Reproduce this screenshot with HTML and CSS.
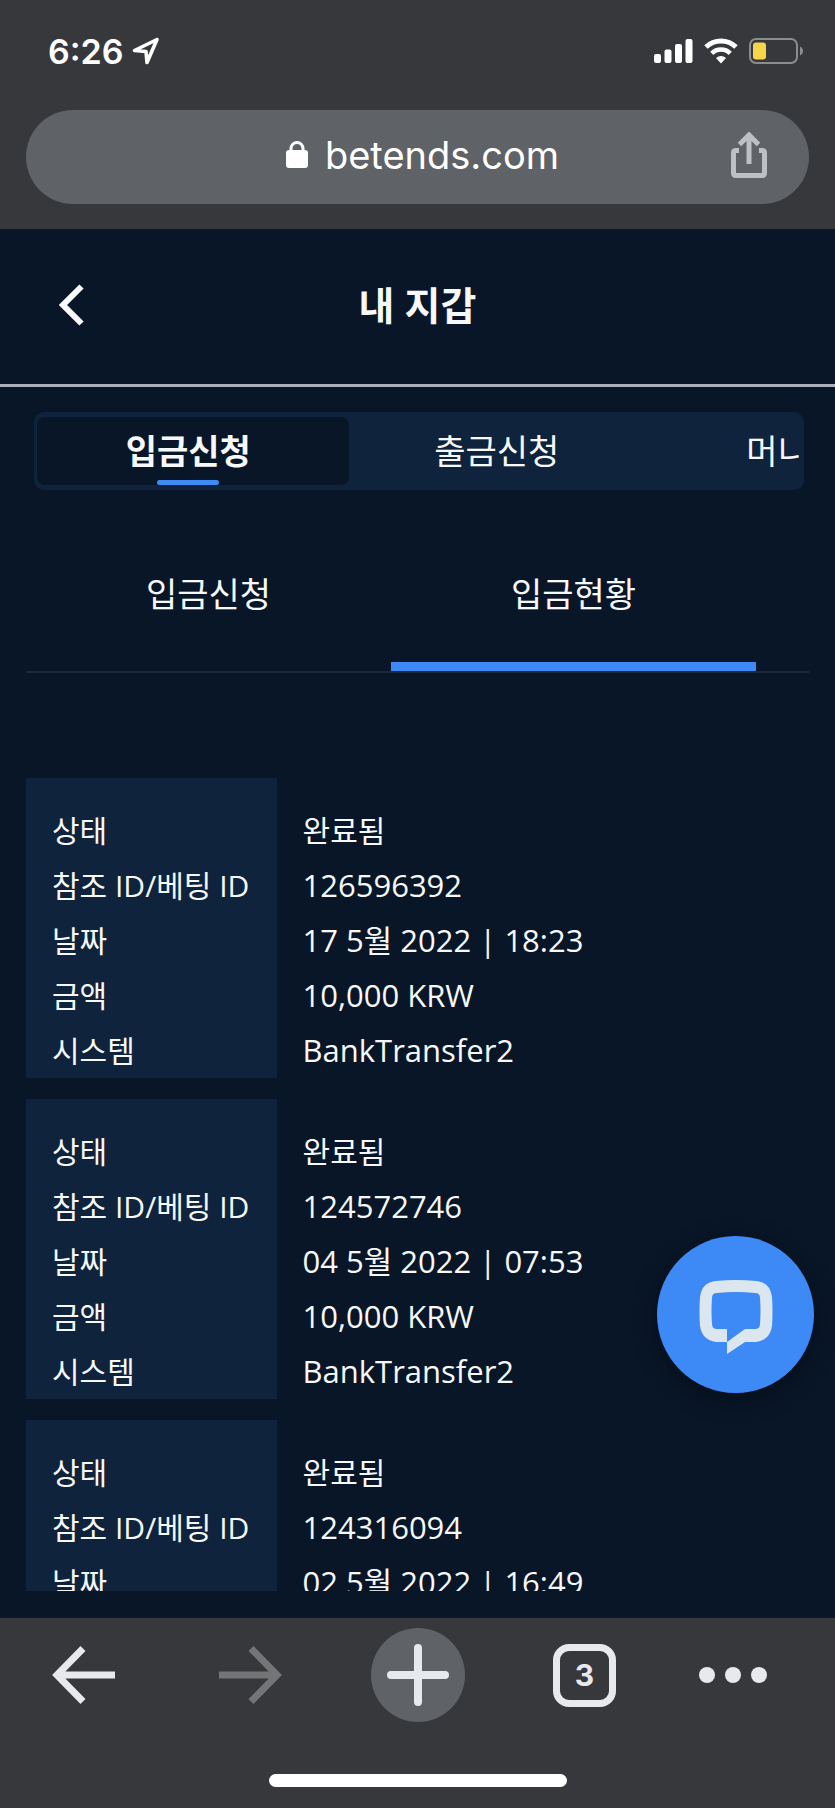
FILE: index.html
```html
<!DOCTYPE html>
<html lang="ko">
<head>
    <meta charset="UTF-8">
    <meta name="viewport" content="width=device-width, initial-scale=1.0">
    <title>내 지갑</title>
    <link rel="stylesheet" href="styles.css">
</head>
<body>

<!-- Browser top -->
<div class="browser-top">
    <div class="status-bar">
        <div class="status-left">
            <span class="time">6:26</span>
            <svg width="28" height="28" viewBox="0 0 28 28" aria-hidden="true">
                <path d="M25 2.500L2.500 13.500L14 14.500L15 25.500Z" fill="none" stroke="#fff" stroke-width="3.600" stroke-linejoin="round"/>
            </svg>
        </div>
        <div class="status-right">
            <svg width="39" height="26" viewBox="0 0 39 26" fill="#fff" aria-hidden="true">
                <rect x="0" y="16" width="7" height="9" rx="2"/>
                <rect x="10.500" y="11.500" width="7" height="13.500" rx="2"/>
                <rect x="21" y="6" width="7" height="19" rx="2"/>
                <rect x="31.500" y="1" width="7" height="24" rx="2"/>
            </svg>
            <svg width="34" height="26" viewBox="0 0 34 26" aria-hidden="true">
                <path d="M2 9A21.500 21.500 0 0 1 32 9" fill="none" stroke="#fff" stroke-width="5"/>
                <path d="M7.800 15.300A13 13 0 0 1 26.200 15.300" fill="none" stroke="#fff" stroke-width="4.600"/>
                <path d="M12 20Q17 16 22 20L17 25.500Z" fill="#fff"/>
            </svg>
            <svg width="54" height="26" viewBox="0 0 54 26" aria-hidden="true">
                <rect x="1" y="1" width="47" height="24" rx="6" fill="none" stroke="#8b8c8e" stroke-width="2"/>
                <rect x="4" y="4.500" width="13" height="17" rx="3" fill="#f7d54a"/>
                <path d="M51 8.500Q54 10 54 13T51 17.500Z" fill="#8b8c8e"/>
            </svg>
        </div>
    </div>
    <div class="address-bar">
        <button type="button" class="address">
            <svg width="22" height="28" viewBox="0 0 22 28" aria-hidden="true">
                <path d="M5 11V7.500a6 6 0 0 1 12 0V11" fill="none" stroke="#fff" stroke-width="3"/>
                <rect x="0" y="9" width="22" height="18" rx="3" fill="#fff"/>
            </svg>
            <span>betends.com</span>
        </button>
        <button type="button" class="share" aria-label="공유">
            <svg width="38" height="48" viewBox="0 0 38 48" fill="none" stroke="#bdc0c5" aria-hidden="true">
                <path d="M9 19.500H6Q3.500 19.500 3.500 22V42Q3.500 44.500 6 44.500H32Q34.500 44.500 34.500 42V22Q34.500 19.500 32 19.500H29" stroke-width="5"/>
                <path d="M19 33V4M9.500 13.500L19 4L28.500 13.500" stroke-width="5"/>
            </svg>
        </button>
    </div>
</div>

<!-- Page -->
<main class="page">
    <header class="page-header">
        <button type="button" class="back" aria-label="뒤로">
            <svg width="26" height="42" viewBox="0 0 26 42" aria-hidden="true">
                <path d="M22.500 2.500L4 21L22.500 39.500" fill="none" stroke="#fafafa" stroke-width="6"/>
            </svg>
        </button>
        <h1>내 지갑</h1>
    </header>

    <nav class="tabs">
        <div class="tabs-inner">
            <button type="button" class="tab active">입금신청</button>
            <button type="button" class="tab">출금신청</button>
            <button type="button" class="tab cut">머니</button>
        </div>
    </nav>

    <nav class="subtabs">
        <button type="button" class="subtab">입금신청</button>
        <button type="button" class="subtab active">입금현황</button>
    </nav>

    <div class="records">
        <table class="record">
            <tr><th scope="row">상태</th><td class="state">완료됨</td></tr>
            <tr><th scope="row">참조 ID/베팅 ID</th><td>126596392</td></tr>
            <tr><th scope="row">날짜</th><td>17 5월 2022 | 18:23</td></tr>
            <tr><th scope="row">금액</th><td>10,000 KRW</td></tr>
            <tr><th scope="row">시스템</th><td>BankTransfer2</td></tr>
        </table>
        <table class="record">
            <tr><th scope="row">상태</th><td class="state">완료됨</td></tr>
            <tr><th scope="row">참조 ID/베팅 ID</th><td>124572746</td></tr>
            <tr><th scope="row">날짜</th><td>04 5월 2022 | 07:53</td></tr>
            <tr><th scope="row">금액</th><td>10,000 KRW</td></tr>
            <tr><th scope="row">시스템</th><td>BankTransfer2</td></tr>
        </table>
        <table class="record">
            <tr><th scope="row">상태</th><td class="state">완료됨</td></tr>
            <tr><th scope="row">참조 ID/베팅 ID</th><td>124316094</td></tr>
            <tr><th scope="row">날짜</th><td>02 5월 2022 | 16:49</td></tr>
        </table>
    </div>
</main>

<button type="button" class="chat" aria-label="채팅">
    <svg width="74" height="74" viewBox="0 0 74 74" aria-hidden="true">
        <path fill="#dce6ee" fill-rule="evenodd" d="M17 1Q37 -1 57 1Q71 2 73 17Q74 31 73 46Q71 60 57 62H46L28 74V62H17Q3 60 1 46Q0 31 1 17Q3 2 17 1ZM18 13Q37 11 56 13Q61 13 61 18Q62 31 61 44Q61 49 56 49H46L28 62V49H18Q13 49 13 44Q12 31 13 18Q13 13 18 13Z"/>
    </svg>
</button>

<!-- Browser bottom -->
<footer class="browser-bottom">
    <div class="toolbar">
        <button type="button" aria-label="이전">
            <svg width="63" height="58" viewBox="0 0 63 58" fill="none" stroke="#e8e9ed" stroke-width="7" aria-hidden="true">
                <path d="M63 29H7M31 2.500L5 29L31 55.500"/>
            </svg>
        </button>
        <button type="button" aria-label="다음" disabled>
            <svg width="63" height="58" viewBox="0 0 63 58" fill="none" stroke="#747577" stroke-width="7" aria-hidden="true">
                <path d="M0 29H56M32 2.500L58 29L32 55.500"/>
            </svg>
        </button>
        <button type="button" class="new-tab" aria-label="새 탭">
            <svg width="62" height="62" viewBox="0 0 62 62" stroke="#e8e9ed" stroke-width="8" stroke-linecap="round" aria-hidden="true">
                <path d="M31 4V58M4 31H58"/>
            </svg>
        </button>
        <button type="button" aria-label="탭 3개"><span class="tab-count">3</span></button>
        <button type="button" class="more" aria-label="더보기">
            <svg width="68" height="16" viewBox="0 0 68 16" fill="#e8e9ed" aria-hidden="true">
                <circle cx="8" cy="8" r="8"/>
                <circle cx="34" cy="8" r="8"/>
                <circle cx="60" cy="8" r="8"/>
            </svg>
        </button>
    </div>
    <div class="home-bar"></div>
</footer>

</body>
</html>
```
FILE: styles.css
```css
* {
    box-sizing: border-box;
}
body {
    margin: 0;
    height: 100vh;
    display: flex;
    flex-direction: column;
    background-color: #091627;
    color: #f7f8f9;
    font-family: "Open Sans", "Noto Sans CJK KR", sans-serif;
}
button {
    padding: 0;
    border: 0;
    background: none;
    color: inherit;
    font: inherit;
}
svg {
    display: block;
    flex-shrink: 0;
}

/* Browser top */
.browser-top {
    padding: 0 26px 25px;
    background-color: #37383b;
    border-bottom: 1px solid #14181d;
    color: #fff;
    font-family: Inter, sans-serif;
}
.status-bar {
    display: flex;
    justify-content: space-between;
    align-items: center;
    height: 110px;
    padding: 0 6px 8px 22px;
}
.status-left,
.status-right {
    display: flex;
    align-items: center;
    gap: 8px;
}
.status-right {
    gap: 11px;
}
.time {
    font-size: 34px;
    font-weight: 600;
}
.address-bar {
    display: flex;
    align-items: center;
    height: 94px;
    padding: 0 41px 4px;
    border-radius: 47px;
    background-color: #5f6266;
}
.address {
    flex: 1;
    display: flex;
    justify-content: center;
    align-items: center;
    gap: 17px;
    padding-left: 48px;
    font-size: 38px;
}

/* Page */
.page {
    flex: 1;
    min-height: 0;
    display: flex;
    flex-direction: column;
    padding-bottom: 26px;
}
.page-header {
    display: grid;
    grid-template-columns: 1fr auto 1fr;
    align-items: center;
    height: 157px;
    padding: 0 59px 4px;
    border-bottom: 3px solid #a9afb4;
}
.back {
    justify-self: start;
}
h1 {
    margin: 0;
    font-size: 39px;
    line-height: 56px;
}
.tabs {
    margin: 25px 31px 0 34px;
    padding: 5px 5px 5px 3px;
    border-radius: 10px;
    background-color: #10233c;
}
.tabs-inner {
    display: grid;
    grid-template-columns: 41% 40% 19%;
    overflow: hidden;
    font-size: 34px;
    line-height: 68px;
}
.tab {
    padding-right: 10px;
    white-space: nowrap;
}
.tab.active {
    position: relative;
    border-radius: 8px;
    background-color: #091627;
    font-weight: bold;
}
.tab.active::after {
    content: "";
    position: absolute;
    left: calc(50% - 36px);
    bottom: 0;
    width: 62px;
    height: 5px;
    border-radius: 3px;
    background-color: #3d8af7;
}
.tab.cut {
    padding: 0 0 0 92px;
    text-align: left;
}
.subtabs {
    display: flex;
    margin: 26px 26px 0;
    border-bottom: 2px solid #1c2938;
    font-size: 34px;
    line-height: 52px;
}
.subtab {
    width: 365px;
    padding: 52px 0 42px;
    border-bottom: 9px solid transparent;
}
.subtab.active {
    border-bottom-color: #3d8af7;
}

/* Deposit records */
.records {
    flex: 1;
    min-height: 0;
    margin: 105px 26px 0;
    overflow: hidden;
}
.record {
    width: 100%;
    margin-bottom: 21px;
    border-collapse: collapse;
    table-layout: fixed;
    line-height: 55px;
}
.record th,
.record td {
    height: 55px;
    padding: 0 0 0 26px;
    text-align: left;
    white-space: nowrap;
}
.record th {
    width: 32%;
    background-color: #10233c;
    font-size: 30px;
    font-weight: normal;
}
.record td {
    font-size: 31px;
}
.record .state {
    font-size: 30px;
}
.record tr:first-child th,
.record tr:first-child td {
    padding-top: 25px;
}

/* Chat button */
.chat {
    position: fixed;
    right: 21px;
    bottom: 415px;
    display: flex;
    justify-content: center;
    align-items: center;
    width: 157px;
    height: 157px;
    padding-top: 4px;
    border-radius: 50%;
    background-color: #3d8af7;
    box-shadow: 0 6px 24px rgba(0, 0, 0, 0.35);
}

/* Browser bottom */
.browser-bottom {
    padding: 10px 0 21px;
    border-top: 1px solid #14181d;
    background-color: #37383b;
}
.toolbar {
    display: grid;
    grid-template-columns: repeat(5, 1fr);
    align-items: center;
    height: 94px;
}
.toolbar button {
    display: flex;
    justify-content: center;
    align-items: center;
}
.toolbar .new-tab {
    justify-self: center;
    width: 94px;
    height: 94px;
    border-radius: 50%;
    background-color: #5f6266;
}
.toolbar .more {
    padding-right: 37px;
}
.tab-count {
    width: 63px;
    height: 63px;
    border: 7px solid #e8e9ed;
    border-radius: 16px;
    color: #e8e9ed;
    font: bold 30px/49px Inter, sans-serif;
}
.home-bar {
    width: 298px;
    height: 13px;
    margin: 52px auto 0;
    border-radius: 7px;
    background-color: #fff;
}
```
